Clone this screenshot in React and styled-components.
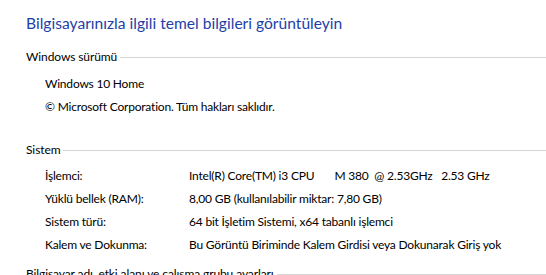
import React from 'react';
import styled, { createGlobalStyle } from 'styled-components';

const GlobalStyle = createGlobalStyle`
    html, body {
        margin: 0;
        padding: 0;
        background: #ffffff;
        overflow: hidden;
    }
    body {
        font-family: Lato, "Noto Sans", Arial, sans-serif;
        color: #000000;
    }
`

const Page = styled.div`
    width: 546px;
    height: 275px;
    overflow: hidden;
    padding: 0 0 0 26px;
    box-sizing: border-box;
`
const Title = styled.h1`
    margin: 0;
    padding-top: 12px;
    font-size: 15.6px;
    font-weight: 400;
    line-height: 22px;
    color: #1e3fa8;
    white-space: nowrap;
`
const Group = styled.section`
    margin-top: ${props => props.gap}px;
`
const GroupHeader = styled.div`
    display: flex;
    align-items: center;
    height: 16px;
    font-size: 12px;
    line-height: 16px;
    letter-spacing: -0.1px;
    white-space: nowrap;
    &::after {
        content: '';
        flex: 1;
        height: 1px;
        margin: 0 0 0 3px;
        background: #d5d5d5;
    }
`
const Rows = styled.div`
    display: grid;
    grid-template-columns: 144px 1fr;
    padding: ${props => props.top}px 0 0 19px;
    font-size: 12px;
    line-height: 23px;
    letter-spacing: -0.2px;
    white-space: nowrap;
`
const Line = styled.div`
    grid-column: 1 / -1;
`
const Value = styled.span`
    white-space: pre;
`

const systemInfo = [
    ['İşlemci:', 'Intel(R) Core(TM) i3 CPU       M 380  @ 2.53GHz   2.53 GHz'],
    ['Yüklü bellek (RAM):', '8,00 GB (kullanılabilir miktar: 7,80 GB)'],
    ['Sistem türü:', '64 bit İşletim Sistemi, x64 tabanlı işlemci'],
    ['Kalem ve Dokunma:', 'Bu Görüntü Biriminde Kalem Girdisi veya Dokunarak Giriş yok'],
];

export default function App() {
    return (
        <>
            <GlobalStyle />
            <Page>
                <Title>Bilgisayarınızla ilgili temel bilgileri görüntüleyin</Title>
                <Group gap={15}>
                    <GroupHeader>Windows sürümü</GroupHeader>
                    <Rows top={7}>
                        <Line>Windows 10 Home</Line>
                        <Line>© Microsoft Corporation. Tüm hakları saklıdır.</Line>
                    </Rows>
                </Group>
                <Group gap={24}>
                    <GroupHeader>Sistem</GroupHeader>
                    <Rows top={6}>
                        {systemInfo.map(([label, value]) => (
                            <React.Fragment key={label}>
                                <span>{label}</span>
                                <Value>{value}</Value>
                            </React.Fragment>
                        ))}
                    </Rows>
                </Group>
                <Group gap={10}>
                    <GroupHeader>Bilgisayar adı, etki alanı ve çalışma grubu ayarları</GroupHeader>
                </Group>
            </Page>
        </>
    )
}
